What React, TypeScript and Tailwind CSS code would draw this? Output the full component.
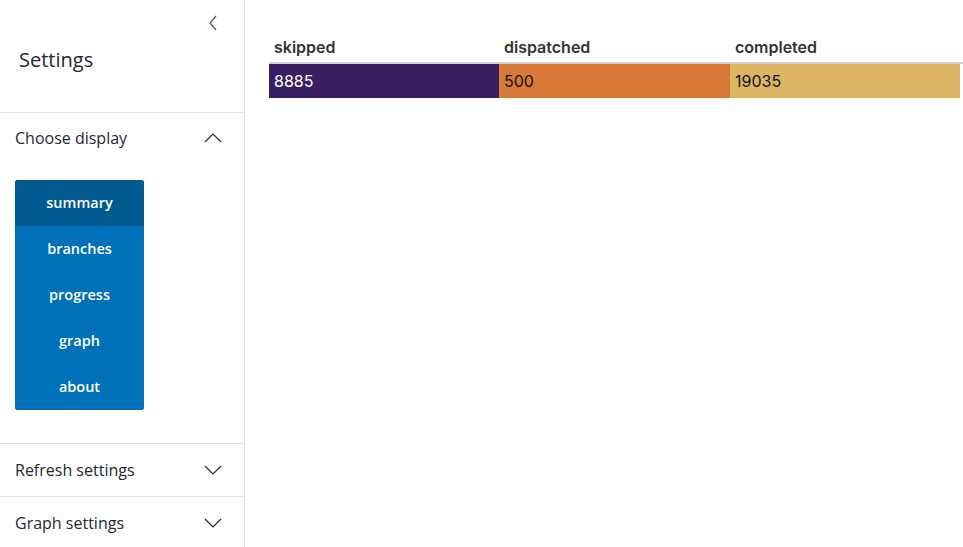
import { useState } from "react";

const displays = ["summary", "branches", "progress", "graph", "about"];

function Chevron({ dir }: { dir: "up" | "down" | "left" }) {
  const d =
    dir === "up" ? "M2 11 L10 3 L18 11" : dir === "down" ? "M2 3 L10 11 L18 3" : "M9 2 L3 9 L9 16";
  const box = dir === "left" ? "0 0 12 18" : "0 0 20 14";
  return (
    <svg
      viewBox={box}
      className={dir === "left" ? "w-[12px] h-[18px]" : "w-[20px] h-[14px]"}
      fill="none"
      stroke={dir === "left" ? "#555" : "#1d2b3a"}
      strokeWidth="1.2"
    >
      <path d={d} />
    </svg>
  );
}

export default function App() {
  const [active, setActive] = useState("summary");

  return (
    <div className="flex h-[547px] w-[963px] overflow-hidden bg-white">
      {/* Sidebar */}
      <aside className="w-[245px] flex-shrink-0 overflow-hidden border-r border-[#e3e6ea] flex flex-col font-['Open_Sans',sans-serif] text-[#262730]">
        <div className="h-[113px] shrink-0 relative border-b border-[#dfe3e8]">
          <button className="absolute left-[207px] top-[14px]">
            <Chevron dir="left" />
          </button>
          <h1 className="absolute left-[19px] top-[46px] text-[20px] leading-[28px]">Settings</h1>
        </div>

        <div className="shrink-0 border-b border-[#dfe3e8] pb-[33px]">
          <div className="flex items-center justify-between h-[50px] pl-[15px] pr-[21px]">
            <span className="text-[16px]">Choose display</span>
            <Chevron dir="up" />
          </div>
          <div className="mt-[17px] ml-[15px] w-[129px] rounded-[3px] overflow-hidden bg-[#0070b8]">
            {displays.map((d) => (
              <button
                key={d}
                onClick={() => setActive(d)}
                className={`block w-full h-[46px] text-[14.5px] font-semibold text-white ${
                  active === d ? "bg-[#00598f]" : "bg-[#0070b8]"
                }`}
              >
                {d}
              </button>
            ))}
          </div>
        </div>

        <div className="shrink-0 flex items-center justify-between h-[53px] pl-[15px] pr-[21px] border-b border-[#dfe3e8]">
          <span className="text-[16px]">Refresh settings</span>
          <Chevron dir="down" />
        </div>
        <div className="shrink-0 flex items-center justify-between h-[52px] pl-[15px] pr-[21px]">
          <span className="text-[16px]">Graph settings</span>
          <Chevron dir="down" />
        </div>
      </aside>

      {/* Main */}
      <main className="flex-1 pt-[36px] pl-[24px] font-['Inter',sans-serif]">
        <div className="w-[697px]">
          <div className="grid grid-cols-[230px_231px_230px] border-b-2 border-[#cfcfd2] h-[28px] items-end pb-[5px]">
            <div className="pl-[5px] text-[16px] leading-[20px] font-semibold text-[#333]">skipped</div>
            <div className="pl-[5px] text-[16px] leading-[20px] font-semibold text-[#333]">dispatched</div>
            <div className="pl-[5px] text-[16px] leading-[20px] font-semibold text-[#333]">completed</div>
          </div>
          <div className="grid grid-cols-[230px_231px_230px] h-[34px] text-[16px]">
            <div className="bg-[#371f61] text-white pl-[5px] flex items-center">8885</div>
            <div className="bg-[#d87a35] text-[#111] pl-[5px] flex items-center">500</div>
            <div className="bg-[#ddb562] text-[#111] pl-[5px] flex items-center">19035</div>
          </div>
        </div>
      </main>
    </div>
  );
}
